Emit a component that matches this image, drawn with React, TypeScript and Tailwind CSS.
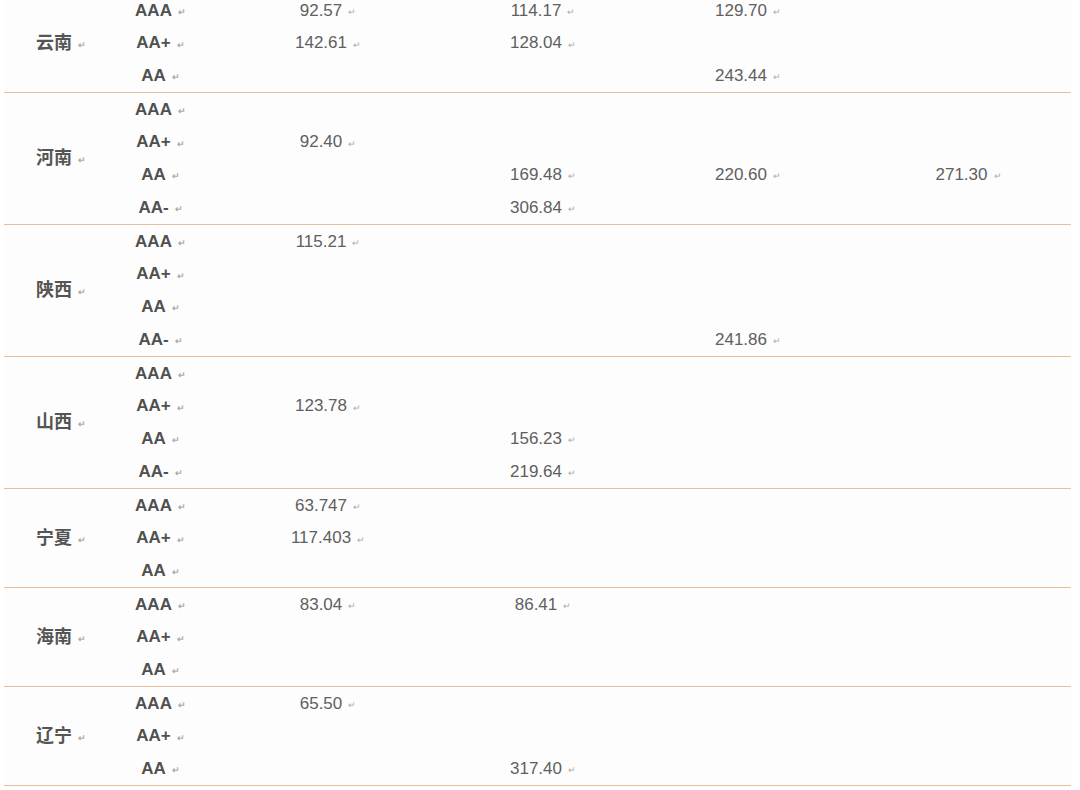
type Row = {
    grade: string;
    vals: string[];
};

type Section = {
    name: string;
    rows: Row[];
};

const sections: Section[] = [
    {
        name: "云南",
        rows: [
            { grade: "AAA", vals: ["92.57", "114.17", "129.70", ""] },
            { grade: "AA+", vals: ["142.61", "128.04", "", ""] },
            { grade: "AA", vals: ["", "", "243.44", ""] },
        ],
    },
    {
        name: "河南",
        rows: [
            { grade: "AAA", vals: ["", "", "", ""] },
            { grade: "AA+", vals: ["92.40", "", "", ""] },
            { grade: "AA", vals: ["", "169.48", "220.60", "271.30"] },
            { grade: "AA-", vals: ["", "306.84", "", ""] },
        ],
    },
    {
        name: "陕西",
        rows: [
            { grade: "AAA", vals: ["115.21", "", "", ""] },
            { grade: "AA+", vals: ["", "", "", ""] },
            { grade: "AA", vals: ["", "", "", ""] },
            { grade: "AA-", vals: ["", "", "241.86", ""] },
        ],
    },
    {
        name: "山西",
        rows: [
            { grade: "AAA", vals: ["", "", "", ""] },
            { grade: "AA+", vals: ["123.78", "", "", ""] },
            { grade: "AA", vals: ["", "156.23", "", ""] },
            { grade: "AA-", vals: ["", "219.64", "", ""] },
        ],
    },
    {
        name: "宁夏",
        rows: [
            { grade: "AAA", vals: ["63.747", "", "", ""] },
            { grade: "AA+", vals: ["117.403", "", "", ""] },
            { grade: "AA", vals: ["", "", "", ""] },
        ],
    },
    {
        name: "海南",
        rows: [
            { grade: "AAA", vals: ["83.04", "86.41", "", ""] },
            { grade: "AA+", vals: ["", "", "", ""] },
            { grade: "AA", vals: ["", "", "", ""] },
        ],
    },
    {
        name: "辽宁",
        rows: [
            { grade: "AAA", vals: ["65.50", "", "", ""] },
            { grade: "AA+", vals: ["", "", "", ""] },
            { grade: "AA", vals: ["", "317.40", "", ""] },
        ],
    },
];

const valCols = ["w-[250px]", "w-[180px]", "w-[230px]", "w-[211px]"];

function Mark() {
    return (
        <span className="ml-[6px] text-[9px] leading-none text-[#ababab] translate-y-[2px] inline-block">
            ↵
        </span>
    );
}

function App() {
    return (
        <div className="w-[1080px] h-[790px] overflow-hidden bg-white font-['Liberation_Sans','Noto_Sans_CJK_SC',sans-serif]">
            <div className="-mt-[6px] ml-[4px] w-[1067px]">
                {sections.map((s) => (
                    <div
                        key={s.name}
                        className={`flex border-b border-[#e6c09c] bg-[#fdfdfd] ${
                            s.rows.length === 4 ? "h-[132px]" : "h-[99px]"
                        }`}
                    >
                        {/* 省份 */}
                        <div className="w-[112px] pl-[2px] flex items-center justify-center text-[18px] font-bold text-[#555]">
                            <span>{s.name}</span>
                            <Mark />
                        </div>

                        {/* 评级 + 数值 */}
                        <div className="flex-1 flex flex-col">
                            {s.rows.map((r) => (
                                <div key={r.grade} className="flex-1 flex items-center">
                                    <div className="w-[84px] pl-[5px] flex items-center justify-center text-[17px] font-bold text-[#505050]">
                                        <span>{r.grade}</span>
                                        <Mark />
                                    </div>
                                    {r.vals.map((v, i) => (
                                        <div
                                            key={i}
                                            className={`${valCols[i]} pl-[6px] flex items-center justify-center text-[17px] text-[#606060]`}
                                        >
                                            {v && (
                                                <>
                                                    <span>{v}</span>
                                                    <Mark />
                                                </>
                                            )}
                                        </div>
                                    ))}
                                </div>
                            ))}
                        </div>
                    </div>
                ))}
            </div>
        </div>
    );
}

export default App;
